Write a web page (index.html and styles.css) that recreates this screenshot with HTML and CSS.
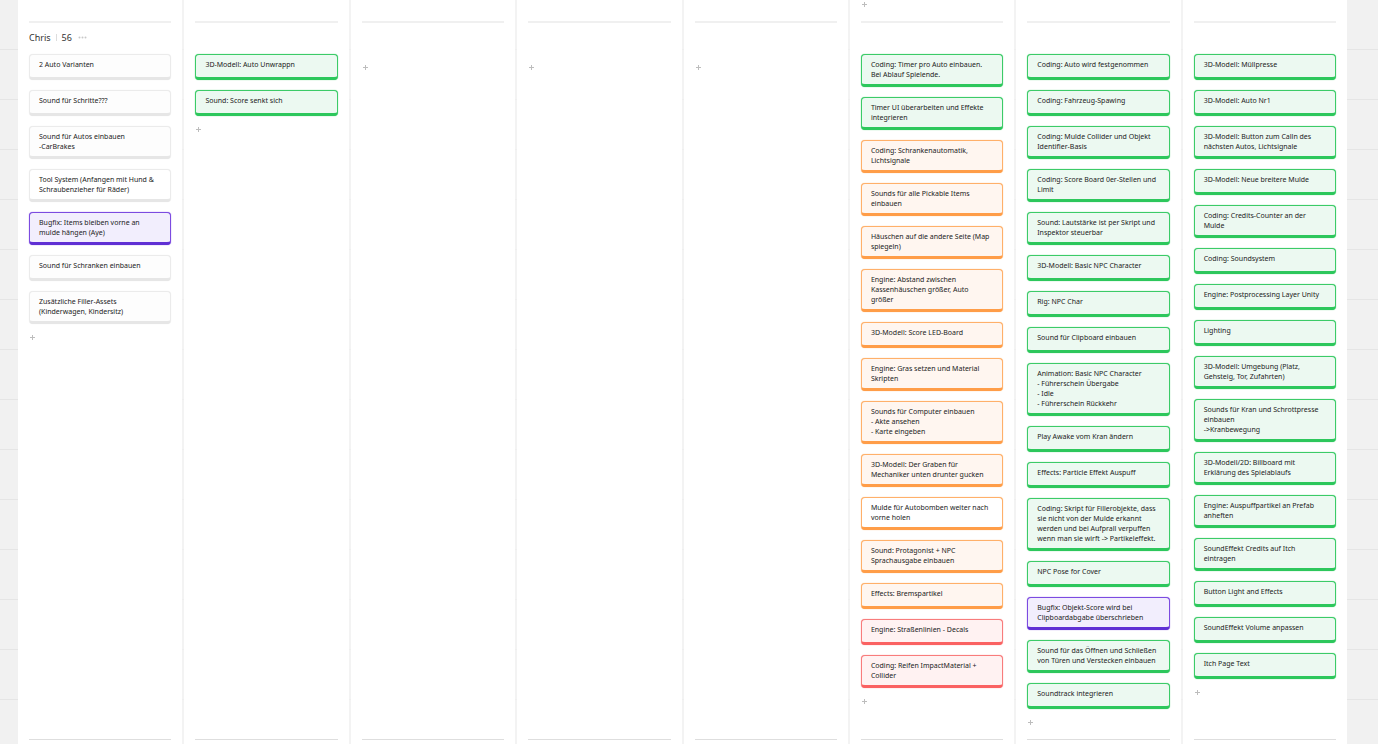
FILE: index.html
```html
<!DOCTYPE html>
<html lang="de">
<head>
<meta charset="utf-8">
<title>Board</title>
<link rel="stylesheet" href="styles.css">
</head>
<body>
<svg class="defs" aria-hidden="true"><symbol id="plus" viewBox="0 0 7 7"><path d="M3.5 1v5M1 3.5h5" fill="none" stroke="currentColor" stroke-width="1"/></symbol></svg>
<main class="board">
  <section class="lane lane-previous">
    <div class="cell"></div><div class="cell"></div><div class="cell"></div><div class="cell"></div><div class="cell"></div>
    <div class="cell"><button class="add" aria-label="Karte hinzufügen"><svg><use href="#plus"/></svg></button></div>
    <div class="cell"></div><div class="cell"></div>
  </section>
  <section class="lane">
    <div class="cell">
      <header class="head"><h2 class="name">Chris</h2><span class="bar"></span><span class="count">56</span>
        <button class="more" aria-label="Mehr"><svg class="dots" viewBox="0 0 9 3"><circle cx="1.5" cy="1.5" r="1"/><circle cx="4.5" cy="1.5" r="1"/><circle cx="7.5" cy="1.5" r="1"/></svg></button></header>
      <article class="card">2 Auto Varianten</article>
      <article class="card">Sound für Schritte???</article>
      <article class="card">Sound für Autos einbauen<br>-CarBrakes</article>
      <article class="card plain">Tool System (Anfangen mit Hund &amp; Schraubenzieher für Räder)</article>
      <article class="card purple">Bugfix: Items bleiben vorne an mulde hängen (Aye)</article>
      <article class="card">Sound für Schranken einbauen</article>
      <article class="card">Zusätzliche Filler-Assets (Kinderwagen, Kindersitz)</article>
      <button class="add" aria-label="Karte hinzufügen"><svg><use href="#plus"/></svg></button>
    </div>
    <div class="cell">
      <div class="head"></div>
      <article class="card green">3D-Modell: Auto Unwrappn</article>
      <article class="card green">Sound: Score senkt sich</article>
      <button class="add" aria-label="Karte hinzufügen"><svg><use href="#plus"/></svg></button>
    </div>
    <div class="cell"><div class="head"></div><button class="add" aria-label="Karte hinzufügen"><svg><use href="#plus"/></svg></button></div>
    <div class="cell"><div class="head"></div><button class="add" aria-label="Karte hinzufügen"><svg><use href="#plus"/></svg></button></div>
    <div class="cell"><div class="head"></div><button class="add" aria-label="Karte hinzufügen"><svg><use href="#plus"/></svg></button></div>
    <div class="cell">
      <div class="head"></div>
      <article class="card green">Coding: Timer pro Auto einbauen. Bei Ablauf Spielende.</article>
      <article class="card green">Timer UI überarbeiten und Effekte integrieren</article>
      <article class="card orange">Coding: Schrankenautomatik, Lichtsignale</article>
      <article class="card orange">Sounds für alle Pickable Items einbauen</article>
      <article class="card orange">Häuschen auf die andere Seite (Map spiegeln)</article>
      <article class="card orange">Engine: Abstand zwischen Kassenhäuschen größer, Auto größer</article>
      <article class="card orange">3D-Modell: Score LED-Board</article>
      <article class="card orange">Engine: Gras setzen und Material Skripten</article>
      <article class="card orange">Sounds für Computer einbauen<br>- Akte ansehen<br>- Karte eingeben</article>
      <article class="card orange">3D-Modell: Der Graben für Mechaniker unten drunter gucken</article>
      <article class="card orange plain">Mulde für Autobomben weiter nach vorne holen</article>
      <article class="card orange">Sound: Protagonist + NPC Sprachausgabe einbauen</article>
      <article class="card orange">Effects: Bremspartikel</article>
      <article class="card red">Engine: Straßenlinien - Decals</article>
      <article class="card red">Coding: Reifen ImpactMaterial + Collider</article>
      <button class="add" aria-label="Karte hinzufügen"><svg><use href="#plus"/></svg></button>
    </div>
    <div class="cell">
      <div class="head"></div>
      <article class="card green">Coding: Auto wird festgenommen</article>
      <article class="card green">Coding: Fahrzeug-Spawing</article>
      <article class="card green">Coding: Mulde Collider und Objekt Identifier-Basis</article>
      <article class="card green">Coding: Score Board 0er-Stellen und Limit</article>
      <article class="card green">Sound: Lautstärke ist per Skript und Inspektor steuerbar</article>
      <article class="card green">3D-Modell: Basic NPC Character</article>
      <article class="card green">Rig: NPC Char</article>
      <article class="card green">Sound für Clipboard einbauen</article>
      <article class="card green">Animation: Basic NPC Character<br>- Führerschein Übergabe<br>- Idle<br>- Führerschein Rückkehr</article>
      <article class="card green">Play Awake vom Kran ändern</article>
      <article class="card green">Effects: Particle Effekt Auspuff</article>
      <article class="card green">Coding: Skript für Fillerobjekte, dass sie nicht von der Mulde erkannt werden und bei Aufprall verpuffen wenn man sie wirft -&gt; Partikeleffekt.</article>
      <article class="card green">NPC Pose for Cover</article>
      <article class="card purple">Bugfix: Objekt-Score wird bei Clipboardabgabe überschrieben</article>
      <article class="card green">Sound für das Öffnen und Schließen von Türen und Verstecken einbauen</article>
      <article class="card green">Soundtrack integrieren</article>
      <button class="add" aria-label="Karte hinzufügen"><svg><use href="#plus"/></svg></button>
    </div>
    <div class="cell">
      <div class="head"></div>
      <article class="card green">3D-Modell: Müllpresse</article>
      <article class="card green">3D-Modell: Auto Nr1</article>
      <article class="card green">3D-Modell: Button zum Calln des nächsten Autos, Lichtsignale</article>
      <article class="card green">3D-Modell: Neue breitere Mulde</article>
      <article class="card green">Coding: Credits-Counter an der Mulde</article>
      <article class="card green">Coding: Soundsystem</article>
      <article class="card green">Engine: Postprocessing Layer Unity</article>
      <article class="card green">Lighting</article>
      <article class="card green">3D-Modell: Umgebung (Platz, Gehsteig, Tor, Zufahrten)</article>
      <article class="card green">Sounds für Kran und Schrottpresse einbauen<br>-&gt;Kranbewegung</article>
      <article class="card green">3D-Modell/2D: Billboard mit Erklärung des Spielablaufs</article>
      <article class="card green">Engine: Auspuffpartikel an Prefab anheften</article>
      <article class="card green">SoundEffekt Credits auf Itch eintragen</article>
      <article class="card green">Button Light and Effects</article>
      <article class="card green">SoundEffekt Volume anpassen</article>
      <article class="card green">Itch Page Text</article>
      <button class="add" aria-label="Karte hinzufügen"><svg><use href="#plus"/></svg></button>
    </div>
  </section>
  <section class="lane lane-next">
    <div class="cell"></div><div class="cell"></div><div class="cell"></div><div class="cell"></div>
    <div class="cell"></div><div class="cell"></div><div class="cell"></div><div class="cell"></div>
  </section>
</main>
</body>
</html>
```

FILE: styles.css
```css
* { box-sizing: border-box; }

body {
  margin: 0;
  height: 100vh;
  overflow: hidden;
  background: #f1f1f1 linear-gradient(#e5e5e5 0 1px, #f1f1f1 1px) 0 49px / 100% 50px;
  color: #222;
  font-family: "Noto Sans", sans-serif;
  font-size: 7px;
  line-height: 10px;
}

.defs { display: none; }

.board {
  display: flex;
  flex-direction: column;
  min-height: 100vh;
  margin: 0 31px 0 18px;
  background: rgba(245, 245, 245, 0.6);
}

.lane {
  display: grid;
  grid-template-columns: repeat(8, minmax(0, 1fr));
  column-gap: 2px;
}

.lane-next { flex: 1; }

.cell {
  display: flex;
  flex-direction: column;
  gap: 10px;
  padding: 0 11px 13px;
  background: #fff;
}

.cell::before {
  content: "";
  height: 2px;
  margin-bottom: -10px;
  background: #f0f0f0;
}

.lane-previous .cell { min-height: 21px; padding-top: 1px; }
.lane-previous .cell::before { display: none; }
.lane-next .cell::before { height: 1px; background: #dedede; }

.head {
  display: flex;
  align-items: center;
  height: 29px;
  margin-bottom: -8px;
  font-size: 9px;
  color: #333;
}

.head:empty + .add { margin-top: 10px; }

.name {
  margin: 0;
  font-size: 9px;
  font-weight: 400;
}

.bar {
  width: 1px;
  height: 7px;
  margin: 0 5px;
  background: #ddd;
}

.more, .add {
  display: flex;
  padding: 0;
  border: 0;
  background: none;
  color: #bdbdbd;
}

.more { margin-left: 6px; }
.dots { width: 9px; height: 3px; fill: #c8c8c8; }
.add { align-self: flex-start; }
.add svg { width: 7px; height: 7px; }

.card {
  min-height: 26px;
  padding: 5px 10px 4px 9px;
  border: 1px solid #ebebeb;
  border-bottom: 3px solid #e6e6e6;
  border-radius: 4px;
  background: #fdfdfd;
  box-shadow: 0 0 1px #ebebeb;
}

.green { border-color: #3ccb68; border-bottom-color: #2dc75c; background: #ecf9f1; box-shadow: 0 0 1px #3ccb68; }
.orange { border-color: #ffb06a; border-bottom-color: #ff9d48; background: #fff6f0; box-shadow: 0 0 1px #ffb06a; }
.red { border-color: #f87c7c; border-bottom-color: #fa6262; background: #fff2f2; box-shadow: 0 0 1px #f87c7c; }
.purple { border-color: #7c4be0; border-bottom-color: #6030d4; background: #f2eefd; box-shadow: 0 0 1px #7c4be0; }
.plain { background: #fff; }
```
